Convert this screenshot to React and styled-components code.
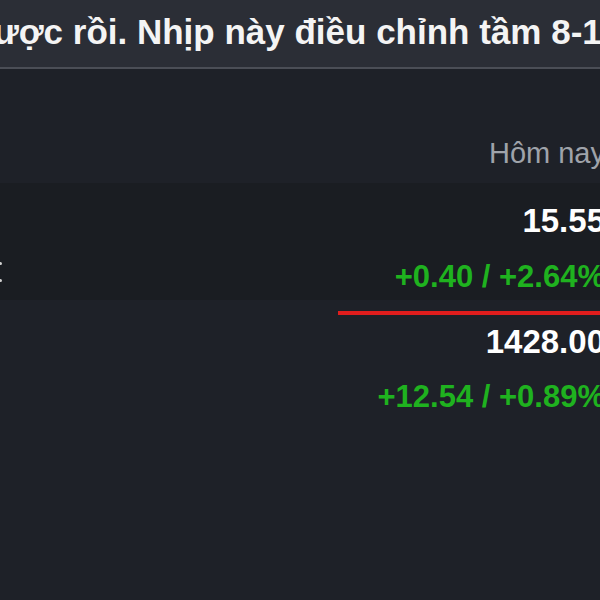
import React from "react";
import styled, { createGlobalStyle } from "styled-components";

const Global = createGlobalStyle`
  html, body { margin: 0; padding: 0; background: #1e2128; }
  body { font-family: "Liberation Sans", Arial, sans-serif; }
`;

const Frame = styled.div`
  width: 600px;
  height: 600px;
  overflow: hidden;
  background: #1e2128;
  display: flex;
  flex-direction: column;
`;

const TopBar = styled.div`
  height: 69px;
  flex: none;
  background: #2b2e36;
  border-bottom: 2px solid #4b4e56;
  box-sizing: border-box;
  padding-top: 14px;
  overflow: hidden;
`;

const Title = styled.div`
  margin-left: -28px;
  font-size: 35px;
  line-height: 35px;
  font-weight: 700;
  color: #f4f4f4;
  white-space: nowrap;
`;

const Track = styled.div`
  width: 605px;
  display: flex;
  flex-direction: column;
`;

const Row = styled.div`
  display: grid;
  grid-template-columns: 1fr 300px;
  background: ${(p) => p.$bg || "transparent"};
  padding-top: ${(p) => p.$pt}px;
  padding-bottom: ${(p) => p.$pb}px;
`;

const Side = styled.div`
  display: flex;
  flex-direction: column;
  padding-top: ${(p) => p.$pt || 0}px;
  gap: 14px;
`;

const Dot = styled.span`
  display: block;
  width: 3px;
  height: 3px;
  margin-left: -1px;
  border-radius: 50%;
  background: #cfcfcf;
`;

const Cells = styled.div`
  display: flex;
  flex-direction: column;
  align-items: flex-end;
  white-space: nowrap;
`;

const ColLabel = styled.div`
  font-size: 29px;
  line-height: 29px;
  color: #9fa3aa;
`;

const Price = styled.div`
  font-size: 33px;
  line-height: 33px;
  font-weight: 700;
  color: #ffffff;
`;

const Change = styled.div`
  margin-top: ${(p) => p.$gap}px;
  font-size: 31px;
  line-height: 31px;
  font-weight: 700;
  color: ${(p) => (p.$up ? "#1fb21f" : "#e0201f")};
`;

const Divider = styled.div`
  margin-top: 11px;
  margin-left: 338px;
  height: 4px;
  background: #e11d1d;
`;

const quotes = [
  { price: "15.55", change: "+0.40 / +2.64%", up: true },
  { price: "1428.00", change: "+12.54 / +0.89%", up: true },
];

export default function App() {
  return (
    <>
      <Global />
      <Frame>
        <TopBar>
          <Title>được rồi. Nhịp này điều chỉnh tầm 8-10</Title>
        </TopBar>
        <Track>
          <Row $pt={70} $pb={15}>
            <Side />
            <Cells>
              <ColLabel>Hôm nay</ColLabel>
            </Cells>
          </Row>
          <Row $pt={21} $pb={8} $bg="#1a1d22">
            <Side $pt={58}>
              <Dot />
              <Dot />
            </Side>
            <Cells>
              <Price>{quotes[0].price}</Price>
              <Change $gap={24} $up={quotes[0].up}>{quotes[0].change}</Change>
            </Cells>
          </Row>
          <Divider />
          <Row $pt={10} $pb={8}>
            <Side />
            <Cells>
              <Price>{quotes[1].price}</Price>
              <Change $gap={23} $up={quotes[1].up}>{quotes[1].change}</Change>
            </Cells>
          </Row>
        </Track>
      </Frame>
    </>
  );
}
